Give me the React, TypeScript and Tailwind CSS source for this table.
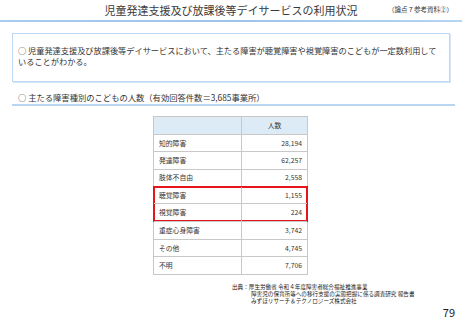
const rows: [string, string][] = [
  ['知的障害', '28,194'],
  ['発達障害', '62,257'],
  ['肢体不自由', '2,558'],
];

const highlighted: [string, string][] = [
  ['聴覚障害', '1,155'],
  ['視覚障害', '224'],
];

const rest: [string, string][] = [
  ['重症心身障害', '3,742'],
  ['その他', '4,745'],
  ['不明', '7,706'],
];

function Row({ label, value, last }: { label: string; value: string; last?: boolean }) {
  return (
    <div className={`grid grid-cols-[88px_1fr] h-[17.3px] ${last ? '' : 'border-b border-[#c8c8c8]'}`}>
      <div className="flex items-center pl-[5px] border-r border-[#c8c8c8]">{label}</div>
      <div className="flex items-center justify-end pr-[5px]">{value}</div>
    </div>
  );
}

export default function App() {
  return (
    <div className="w-[462px] h-[320px] bg-white text-[#333] font-['Noto_Sans_CJK_JP',sans-serif] overflow-hidden">
      {/* title */}
      <div className="relative h-[20px] flex items-center justify-center pt-[1px]">
        <h1 className="text-[11px] leading-none text-[#3a3a3a]">児童発達支援及び放課後等デイサービスの利用状況</h1>
        <span className="absolute right-[9px] top-[6px] text-[6.5px] leading-none">（論点７参考資料②）</span>
      </div>
      <div className="h-[2px] bg-gradient-to-r from-[#a9cbee] via-[#9cc3ea] to-[#b5d4f1]" />

      {/* summary box */}
      <div className="mx-[12px] mt-[11px] h-[49px] border border-[#bcd8f3] shadow-[1px_1px_0_#d3e5f7] px-[5px] pt-[11px] text-[8.2px] leading-[10.5px] whitespace-nowrap">
        <div>○ 児童発達支援及び放課後等デイサービスにおいて、主たる障害が聴覚障害や視覚障害のこどもが一定数利用して</div>
        <div>いることがわかる。</div>
      </div>

      {/* heading */}
      <div className="ml-[12px] mr-[7px] mt-[10px] pl-[6px] pb-[2px] border-b-2 border-[#b8d5f2] text-[8.3px] leading-[10px] whitespace-nowrap">
        ○ 主たる障害種別のこどもの人数（有効回答件数＝3,685事業所）
      </div>

      {/* table */}
      <div className="ml-[153px] mt-[10px] w-[155px] text-[6.8px] leading-none">
        <div className="border border-[#c8c8c8]">
          <div className="grid grid-cols-[88px_1fr] h-[18px] bg-[#ddebf7] border-b border-[#c8c8c8]">
            <div className="border-r border-[#c8c8c8]" />
            <div className="flex items-center justify-center">人数</div>
          </div>
          {rows.map(([l, v]) => (
            <Row key={l} label={l} value={v} />
          ))}
          <div className="-mx-[1px] border-2 border-[#e8141c] -my-[1px]">
            <div className="-mx-[1px] -my-[1px]">
              {highlighted.map(([l, v], i) => (
                <Row key={l} label={l} value={v} last={i === 1} />
              ))}
            </div>
          </div>
          <div className="border-t border-[#c8c8c8]">
            {rest.map(([l, v], i) => (
              <Row key={l} label={l} value={v} last={i === rest.length - 1} />
            ))}
          </div>
        </div>
      </div>

      {/* source + page number */}
      <div className="ml-[232px] mt-[9px] text-[5.6px] leading-[6.8px] text-[#222] whitespace-nowrap">
        <div>出典：厚生労働省 令和４年度障害者総合福祉推進事業</div>
        <div className="pl-[19px]">障害児の保育所等への移行支援の実態把握に係る調査研究 報告書</div>
        <div className="pl-[19px]">みずほリサーチ＆テクノロジーズ株式会社</div>
      </div>
      <div className="flex justify-end pr-[7px] mt-[2px] text-[11px] leading-none text-[#222]">79</div>
    </div>
  );
}
